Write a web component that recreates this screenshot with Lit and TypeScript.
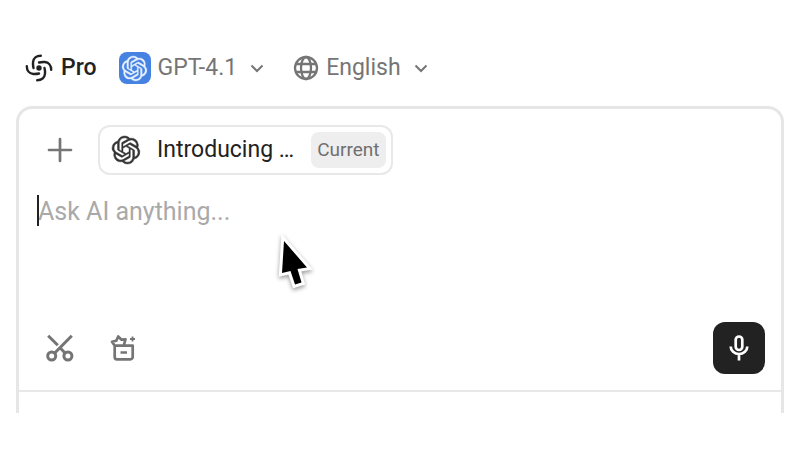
import { LitElement, html, css, svg } from "lit";
import { customElement } from "lit/decorators.js";

const knot = svg`<path d="M22.2819 9.8211a5.9847 5.9847 0 0 0-.5157-4.9108 6.0462 6.0462 0 0 0-6.5098-2.9A6.0651 6.0651 0 0 0 4.9807 4.1818a5.9847 5.9847 0 0 0-3.9977 2.9 6.0462 6.0462 0 0 0 .7427 7.0966 5.98 5.98 0 0 0 .511 4.9107 6.051 6.051 0 0 0 6.5146 2.9001A5.9847 5.9847 0 0 0 13.2599 24a6.0557 6.0557 0 0 0 5.7718-4.2058 5.9894 5.9894 0 0 0 3.9977-2.9001 6.0557 6.0557 0 0 0-.7475-7.0729zm-9.022 12.6081a4.4755 4.4755 0 0 1-2.8764-1.0408l.1419-.0804 4.7783-2.7582a.7948.7948 0 0 0 .3927-.6813v-6.7369l2.02 1.1686a.071.071 0 0 1 .038.052v5.5826a4.504 4.504 0 0 1-4.4945 4.4944zm-9.6607-4.1254a4.4708 4.4708 0 0 1-.5346-3.0137l.142.0852 4.783 2.7582a.7712.7712 0 0 0 .7806 0l5.8428-3.3685v2.3324a.0804.0804 0 0 1-.0332.0615L9.74 19.9502a4.4992 4.4992 0 0 1-6.1408-1.6464zM2.3408 7.8956a4.485 4.485 0 0 1 2.3655-1.9728V11.6a.7664.7664 0 0 0 .3879.6765l5.8144 3.3543-2.0201 1.1685a.0757.0757 0 0 1-.071 0l-4.8303-2.7865A4.504 4.504 0 0 1 2.3408 7.872zm16.5963 3.8558L13.1038 8.364 15.1192 7.2a.0757.0757 0 0 1 .071 0l4.8303 2.7913a4.4944 4.4944 0 0 1-.6765 8.1042v-5.6772a.79.79 0 0 0-.407-.667zm2.0107-3.0231l-.142-.0852-4.7735-2.7818a.7759.7759 0 0 0-.7854 0L9.409 9.2297V6.8974a.0662.0662 0 0 1 .0284-.0615l4.8303-2.7866a4.4992 4.4992 0 0 1 6.6802 4.66zM8.3065 12.863l-2.02-1.1638a.0804.0804 0 0 1-.038-.0567V6.0742a4.4992 4.4992 0 0 1 7.3757-3.4537l-.142.0805L8.704 5.459a.7948.7948 0 0 0-.3927.6813zm1.0976-2.3654l2.602-1.4998 2.6069 1.4998v2.9994l-2.5974 1.4997-2.6067-1.4997Z"/>`;

const chevron = html`<svg class="chevron" viewBox="0 0 14 14" aria-hidden="true"><path d="M1.5 4.5 7 10l5.5-5.5"/></svg>`;

@customElement("app-root")
export class AppRoot extends LitElement {
  static styles = css`
    :host {
      display: block;
      box-sizing: border-box;
      min-height: 100vh;
      padding: 48px 16px 36px;
      background: #fff;
      color: #757575;
      font-family: Roboto, "Liberation Sans", sans-serif;
      font-size: 23px;
      line-height: 32px;
    }
    * { box-sizing: border-box; }
    button {
      display: flex;
      align-items: center;
      margin: 0;
      padding: 0;
      border: 0;
      background: none;
      color: inherit;
      font: inherit;
      cursor: pointer;
    }
    svg { display: block; flex: none; overflow: visible; }
    .line { fill: none; stroke: currentColor; }
    .bar {
      display: flex;
      align-items: center;
      height: 40px;
      padding-left: 9px;
    }
    .pro { gap: 8px; margin-right: 22px; color: #222; font-weight: 500; }
    .pro svg { width: 28px; height: 28px; }
    .model { gap: 7px; margin-right: 29px; }
    .badge {
      display: grid;
      place-items: center;
      width: 32px;
      height: 32px;
      border-radius: 8px;
      background: #4682e2;
    }
    .badge svg {
      width: 25px;
      height: 25px;
      fill: #e8f1ff;
      stroke: #e8f1ff;
      stroke-width: 0.3;
    }
    .language { gap: 7px; }
    .language > svg:first-child { width: 26px; height: 26px; }
    .chevron {
      width: 14px;
      height: 14px;
      margin-left: 6px;
      fill: none;
      stroke: currentColor;
      stroke-width: 2;
    }
    .panel {
      margin-top: 18px;
      border: 3px solid #e6e6e6;
      border-bottom: 0;
      border-radius: 16px 16px 0 0;
    }
    .context {
      display: flex;
      align-items: center;
      gap: 25px;
      padding: 16px 28px 0;
    }
    .add svg { width: 26px; height: 26px; }
    .chip {
      gap: 17px;
      height: 50px;
      padding: 0 5px 0 12px;
      border: 2px solid #e8e8e8;
      border-radius: 12px;
      color: #222;
    }
    .chip svg {
      width: 28px;
      height: 28px;
      fill: #333;
      stroke: #333;
      stroke-width: 0.4;
    }
    .tag {
      height: 36px;
      padding: 0 6px;
      border-radius: 8px;
      background: #eee;
      color: #707070;
      font-size: 19px;
      line-height: 36px;
    }
    .prompt {
      display: block;
      width: 100%;
      height: 130px;
      padding: 21px 19px;
      border: 0;
      outline: 0;
      resize: none;
      background: none;
      color: #222;
      caret-color: #222;
      font: inherit;
      font-size: 25px;
    }
    .prompt::placeholder { color: #a9a9a9; opacity: 1; }
    .field { position: relative; }
    .caret {
      position: absolute;
      left: 18px;
      top: 20px;
      width: 2px;
      height: 31px;
      background: #222;
    }
    .pointer {
      position: absolute;
      left: 258px;
      top: 60px;
      width: 40px;
      height: 60px;
      filter: drop-shadow(0 2px 2px #0006);
    }
    .tools {
      display: flex;
      align-items: center;
      gap: 35px;
      padding: 17px 16px 16px 27px;
    }
    .tools svg { width: 28px; height: 28px; }
    .mic {
      justify-content: center;
      width: 52px;
      height: 52px;
      margin-left: auto;
      border-radius: 12px;
      background: #222;
      color: #fff;
    }
    .footer { height: 23px; border-top: 2px solid #e8e8e8; }
  `;

  render() {
    return html`
      <nav class="bar">
        <button class="pro">
          <svg viewBox="0 0 28 28" aria-hidden="true">
            <circle cx="14" cy="14" r="2.7" fill="currentColor"/>
            ${[0, 90, 180, 270].map((a) => svg`<path class="line" stroke-width="2.4" stroke-linecap="round" transform="rotate(${a} 14 14)" d="M15.800 1.800C11.500 1.800 8.300 4.200 8 8.300C7.900 10.500 8 12.200 8.500 14"/>`)}
          </svg>
          <span>Pro</span>
        </button>
        <button class="model">
          <span class="badge"><svg viewBox="0 0 24 24" aria-hidden="true">${knot}</svg></span>
          <span>GPT-4.1</span>${chevron}
        </button>
        <button class="language">
          <svg viewBox="0 0 26 26" aria-hidden="true">
            <g class="line" stroke-width="2.3"><circle cx="13" cy="13" r="11"/><ellipse cx="13" cy="13" rx="5" ry="11"/><path d="M3 9h20M3 17h20"/></g>
          </svg>
          <span>English</span>${chevron}
        </button>
      </nav>
      <main class="panel">
        <div class="context">
          <button class="add" aria-label="Add">
            <svg viewBox="0 0 26 26"><path class="line" stroke-width="2.700" stroke-linecap="round" d="M13 2v22M2 13h22"/></svg>
          </button>
          <button class="chip">
            <svg viewBox="0 0 24 24" aria-hidden="true">${knot}</svg>
            <span>Introducing …</span>
            <span class="tag">Current</span>
          </button>
        </div>
        <div class="field">
          <textarea class="prompt" aria-label="Message" placeholder="Ask AI anything..."></textarea>
          <span class="caret"></span>
          <svg class="pointer" viewBox="0 0 40 60" aria-hidden="true">
            <path d="M7 6 30 32.500 20.500 34 24.500 47.500 18 49.500 13.500 36 5 38Z" fill="#000" stroke="#fff" stroke-width="6" paint-order="stroke"/>
          </svg>
        </div>
        <div class="tools">
          <button aria-label="Screenshot">
            <svg viewBox="0 0 28 28"><g class="line" stroke-width="3"><circle cx="5.700" cy="22" r="4"/><circle cx="21.900" cy="22" r="4"/><path d="M8.500 19.200 25.800 1.700M2.200 1.700l9.600 9.600M15 14.800l4.200 4.400"/></g></svg>
          </button>
          <button aria-label="Toolbox">
            <svg viewBox="0 0 28 28"><g class="line" stroke-width="2.700" stroke-linejoin="round"><path d="M5.700 11.700h18v11.300a2.300 2.300 0 0 1-2.300 2.300H8a2.300 2.300 0 0 1-2.300-2.300ZM11.500 18.500h6.500M5.700 11.700 3 7.800l4.300-1L9.200 2.500l3.300 3.200 4-.4-1.700 6"/><path stroke-width="1.800" d="M23.500 2.500v5M21 5h5"/></g></svg>
          </button>
          <button class="mic" aria-label="Voice input">
            <svg viewBox="0 0 28 28"><g class="line" stroke-width="2.700"><rect x="10.700" y="2.500" width="6.600" height="13.500" rx="3.300"/><path d="M5.700 12.500a8.300 7.500 0 0 0 16.600 0M14 20v6.500"/></g></svg>
          </button>
        </div>
        <div class="footer"></div>
      </main>
    `;
  }
}
